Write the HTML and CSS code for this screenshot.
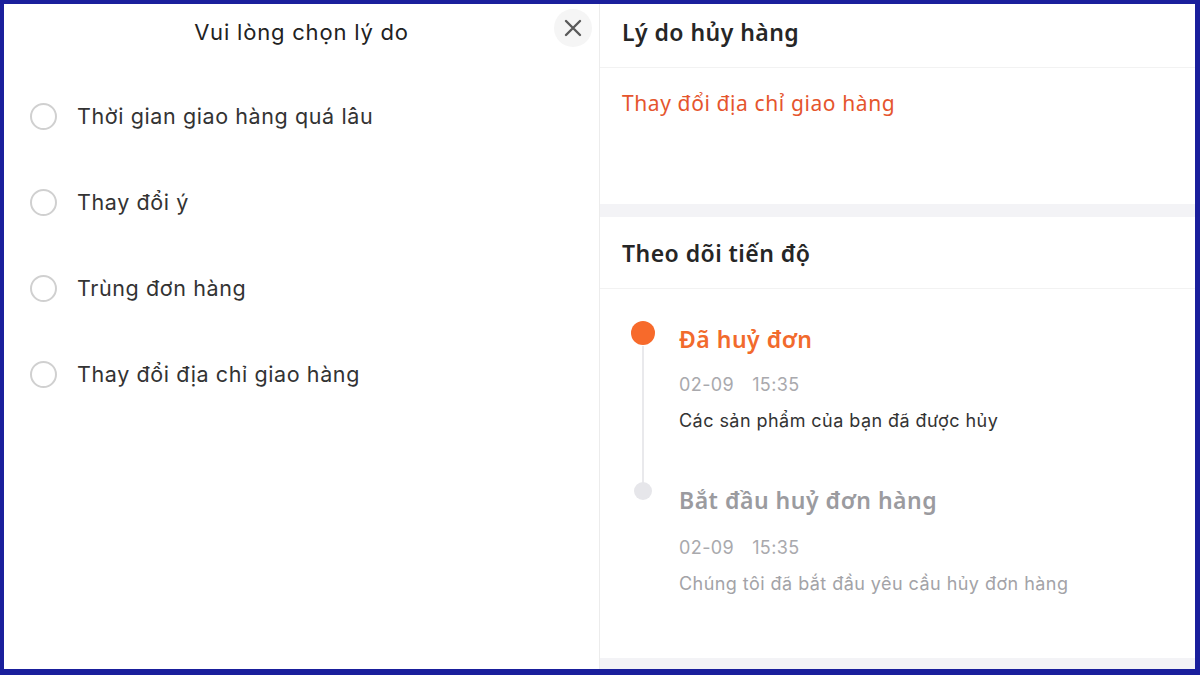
FILE: index.html
```html
<!DOCTYPE html>
<html lang="vi">
<head>
    <meta charset="UTF-8">
    <meta name="viewport" content="width=device-width, initial-scale=1.0">
    <title>Hủy đơn hàng</title>
    <link rel="stylesheet" href="styles.css">
</head>
<body>
    <div class="frame">
        <!-- Reason picker sheet -->
        <section class="picker">
            <div class="picker-header">
                <span></span>
                <h2>Vui lòng chọn lý do</h2>
                <button class="close-btn" aria-label="Đóng">
                    <svg width="20" height="20" viewBox="0 0 20 20"><path d="M3 3 L17 17 M17 3 L3 17" stroke="#5a5a5a" stroke-width="2.4" stroke-linecap="round"/></svg>
                </button>
            </div>
            <ul class="reason-list">
                <li class="reason"><span class="radio"></span>Thời gian giao hàng quá lâu</li>
                <li class="reason"><span class="radio"></span>Thay đổi ý</li>
                <li class="reason"><span class="radio"></span>Trùng đơn hàng</li>
                <li class="reason"><span class="radio"></span>Thay đổi địa chỉ giao hàng</li>
            </ul>
        </section>

        <!-- Order detail -->
        <section class="detail">
            <div class="card">
                <h3 class="card-title">Lý do hủy hàng</h3>
                <div class="reason-value">Thay đổi địa chỉ giao hàng</div>
            </div>
            <div class="card">
                <h3 class="card-title">Theo dõi tiến độ</h3>
                <div class="timeline">
                    <div class="step active">
                        <span class="dot"></span>
                        <div class="step-body">
                            <div class="step-title">Đã huỷ đơn</div>
                            <div class="step-time"><span>02-09</span>15:35</div>
                            <div class="step-desc">Các sản phẩm của bạn đã được hủy</div>
                        </div>
                    </div>
                    <div class="step">
                        <span class="dot"></span>
                        <div class="step-body">
                            <div class="step-title">Bắt đầu huỷ đơn hàng</div>
                            <div class="step-time"><span>02-09</span>15:35</div>
                            <div class="step-desc">Chúng tôi đã bắt đầu yêu cầu hủy đơn hàng</div>
                        </div>
                    </div>
                </div>
            </div>
        </section>
    </div>
</body>
</html>
```

FILE: styles.css
```css
* {
    margin: 0;
    padding: 0;
    box-sizing: border-box;
}

body {
    font-family: Inter, Roboto, "Liberation Sans", sans-serif;
    background-color: #1a1f9c;
}

.frame {
    width: 1200px;
    height: 675px;
    border: 4px solid #1a1f9c;
    border-right-width: 5px;
    border-bottom-width: 6px;
    display: flex;
    background-color: #f3f3f6;
    overflow: hidden;
}

/* left: reason picker */

.picker {
    width: 595px;
    background-color: #fff;
}

.picker-header {
    height: 62px;
    padding-bottom: 6px;
    display: grid;
    grid-template-columns: 48px 1fr 48px;
    align-items: center;
}

.picker-header h2 {
    text-align: center;
    font-size: 22px;
    font-weight: 400;
    letter-spacing: 0.8px;
    color: #222;
}

.close-btn {
    width: 38px;
    height: 38px;
    border: none;
    border-radius: 50%;
    background-color: #f5f5f5;
    display: flex;
    align-items: center;
    justify-content: center;
    margin: -8px 0 0 3px;
}

.reason-list {
    list-style: none;
    padding-top: 7px;
}

.reason {
    height: 86px;
    display: flex;
    align-items: center;
    gap: 20px;
    padding-left: 26px;
    font-size: 21.5px;
    letter-spacing: 0.6px;
    color: #333;
}

.radio {
    width: 27px;
    height: 27px;
    border: 2px solid #d0d0d0;
    border-radius: 50%;
}

/* right: order detail */

.detail {
    flex: 1;
    display: flex;
    flex-direction: column;
    gap: 13px;
    border-left: 1px solid #ececec;
    font-family: "Noto Sans", sans-serif;
}

.card {
    background-color: #fff;
}

.card-title {
    height: 64px;
    padding: 0 0 7px 22px;
    display: flex;
    align-items: center;
    font-size: 23px;
    font-weight: 600;
    letter-spacing: 0.45px;
    color: #262626;
    border-bottom: 1px solid #f2f2f2;
}

.card + .card .card-title {
    height: 72px;
    padding-bottom: 0;
}

.reason-value {
    height: 136px;
    padding: 21px 22px 0;
    font-size: 21px;
    letter-spacing: 0.6px;
    color: #e5552d;
}

.timeline {
    height: 369px;
    padding: 35px 22px 0;
}

.step {
    display: flex;
    gap: 15px;
    position: relative;
}

.step.active {
    padding-bottom: 52px;
}

.step.active::after {
    content: "";
    position: absolute;
    left: 20px;
    top: 22px;
    bottom: 0;
    width: 2px;
    background-color: #e9e9ec;
}

.dot {
    width: 42px;
    display: flex;
    justify-content: center;
}

.dot::before {
    content: "";
    width: 18px;
    height: 18px;
    margin-top: -3px;
    border-radius: 50%;
    background-color: #e6e6ea;
}

.step.active .dot::before {
    width: 24px;
    height: 24px;
    background-color: #f76a2b;
}

.step-title {
    font-size: 23px;
    font-weight: 600;
    line-height: 30px;
    letter-spacing: 0.5px;
    color: #9b9b9f;
}

.step.active .step-title {
    color: #f26a2c;
}

.step-time {
    margin-top: 19px;
    font-family: Inter, Roboto, sans-serif;
    font-size: 18px;
    line-height: 24px;
    letter-spacing: 0.4px;
    color: #a9a9ad;
}

.step + .step .step-time {
    margin-top: 21px;
}

.step-time span {
    margin-right: 18px;
}

.step-desc {
    margin-top: 12px;
    font-family: Inter, Roboto, sans-serif;
    font-size: 18px;
    line-height: 24px;
    letter-spacing: 0.45px;
    color: #a3a3a7;
}

.step.active .step-desc {
    color: #333;
}
```
